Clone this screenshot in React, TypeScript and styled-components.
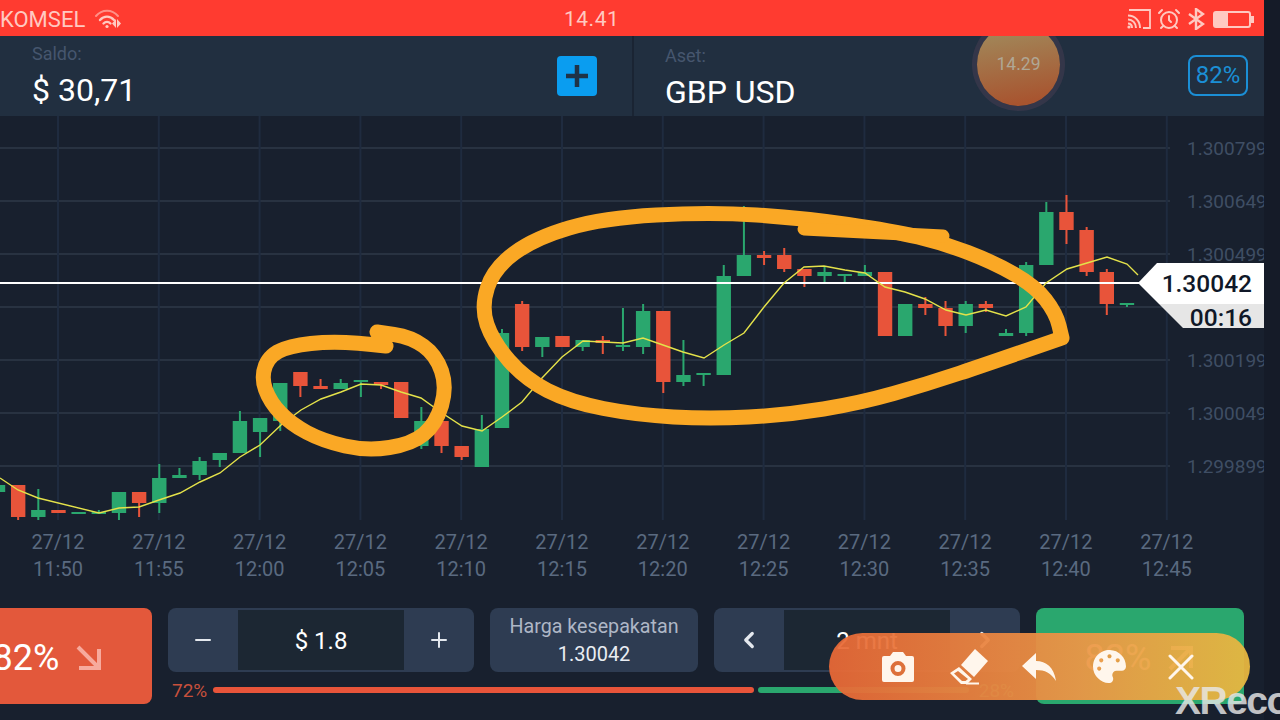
import styled, { createGlobalStyle } from "styled-components";
import { Minus, Plus, ChevronLeft, ChevronRight, AlarmClock } from "lucide-react";
import { FaPalette } from "react-icons/fa";

const RED = "#e8543a";
const GREEN = "#2aa76e";

// x = -2 + 20.16 * i, [up, bodyTop, bodyBottom, wickTop, wickBottom]
const candles: number[][] = [
  [1, 485, 492, 485, 492], [0, 485, 517, 485, 520], [1, 510, 517, 489, 520], [0, 510, 513, 510, 513],
  [1, 512, 514, 512, 514], [1, 512, 514, 510, 514], [1, 492, 513, 492, 520], [0, 492, 503, 492, 517],
  [1, 478, 503, 464, 513], [1, 475, 478, 468, 478], [1, 461, 475, 457, 480], [1, 453, 460, 453, 467],
  [1, 421, 453, 411, 453], [1, 418, 432, 418, 457], [1, 383, 421, 383, 431], [0, 372, 386, 372, 397],
  [0, 386, 389, 379, 389], [1, 383, 389, 379, 389], [1, 380, 382, 380, 397], [0, 382, 385, 382, 389],
  [0, 382, 418, 382, 418], [1, 421, 446, 407, 449], [0, 421, 446, 421, 453], [0, 446, 457, 446, 460],
  [1, 429, 467, 415, 467], [1, 333, 428, 329, 428], [0, 304, 347, 301, 351], [1, 337, 347, 337, 357],
  [0, 336, 347, 336, 347], [1, 340, 347, 340, 351], [0, 340, 343, 336, 354], [1, 345, 347, 308, 351],
  [1, 311, 347, 304, 354], [0, 311, 382, 311, 393], [1, 375, 382, 340, 386], [1, 373, 375, 373, 386],
  [1, 276, 375, 265, 375], [1, 255, 276, 206, 276], [0, 255, 258, 251, 265], [0, 255, 269, 248, 272],
  [0, 269, 276, 269, 287], [1, 272, 276, 267, 282], [1, 274, 276, 274, 282], [1, 272, 276, 265, 276],
  [0, 272, 336, 272, 336], [1, 304, 336, 304, 336], [0, 304, 308, 297, 315], [0, 308, 326, 301, 336],
  [1, 304, 326, 301, 333], [0, 304, 308, 301, 312], [1, 333, 336, 329, 336], [1, 265, 333, 262, 336],
  [1, 212, 265, 202, 265], [0, 212, 230, 195, 244], [0, 230, 272, 227, 276], [0, 272, 304, 269, 315],
  [1, 303, 305, 303, 307],
];

const maLine =
  "0,478 18,490 38,498 99,513 119,508 139,507 159,500 180,493 200,482 220,473 240,457 260,445 281,425 301,410 321,399 341,392 361,384 381,385 401,392 421,398 442,413 462,426 482,431 502,417 522,402 542,378 562,357 583,341 603,342 623,343 643,338 663,345 683,352 704,358 724,345 744,333 764,307 784,283 804,267 824,266 845,270 865,273 885,287 905,292 925,299 946,310 966,315 986,310 1006,316 1026,307 1046,283 1067,269 1087,263 1107,257 1127,264 1138,275";

const smallLoop: number[][] = [
  [386, 346], [347, 341], [298, 344], [270, 354], [261, 377], [270, 402], [291, 424], [323, 441],
  [367, 451], [412, 444], [436, 424], [447, 387], [436, 355], [411, 337], [377, 332],
];

const bigLoop: number[][] = [
  [1062, 338], [993, 362], [927, 384], [860, 403], [787, 415], [710, 419], [637, 415], [570, 402],
  [525, 379], [493, 342], [481, 307], [494, 268], [535, 238], [603, 218], [710, 212], [803, 218],
  [893, 231], [943, 243], [993, 262], [1035, 286], [1056, 313], [1062, 338],
];

// 手書きの線をなめらかにする
const smooth = (pts: number[][]) => {
  let d = `M${pts[0][0]} ${pts[0][1]}`;
  for (let i = 1; i < pts.length - 1; i++) {
    const mx = (pts[i][0] + pts[i + 1][0]) / 2;
    const my = (pts[i][1] + pts[i + 1][1]) / 2;
    d += ` Q${pts[i][0]} ${pts[i][1]} ${mx} ${my}`;
  }
  const last = pts[pts.length - 1];
  return d + ` L${last[0]} ${last[1]}`;
};

// the 4th row sits behind the price tag, so it stays empty
const prices = ["1.300799", "1.300649", "1.300499", "", "1.300199", "1.300049", "1.299899"];
const times = ["11:50", "11:55", "12:00", "12:05", "12:10", "12:15", "12:20", "12:25", "12:30", "12:35", "12:40", "12:45"];

const App = () => {
  return (
    <Root>
      <GlobalStyle />
      <Screen>
        <StatusBar>
          <Carrier>
            KOMSEL
            <svg width="28" height="20" viewBox="0 0 28 20" fill="none" stroke="currentColor" strokeLinecap="round">
              <path d="M2 7C8 0 18 0 24 7" strokeWidth="2" opacity="0.6" />
              <path d="M6 11C10 6.5 16 6.5 20 11" strokeWidth="2.4" />
              <path d="M9.5 14.5C11.5 12.5 14.5 12.5 16.5 14.5" strokeWidth="2.4" />
              <circle cx="13" cy="17.5" r="1.6" fill="currentColor" stroke="none" />
              <path d="M22 10v9l-4-4.5zM23 10v9l4-4.5z" fill="currentColor" stroke="none" />
            </svg>
          </Carrier>
          <Clock>14.41</Clock>
          <StatusIcons>
            <svg width="24" height="20" viewBox="0 0 24 20" fill="none" stroke="currentColor">
              <path d="M2 1h21v18h-7" strokeWidth="1.8" />
              <path d="M1 6.500C8 6.500 13 12 13 19M1 10.500C5.500 10.500 9 14 9 19M1 14.500C3.500 14.500 5 16.500 5 19" strokeWidth="2" />
              <circle cx="2" cy="18" r="1.600" fill="currentColor" stroke="none" />
            </svg>
            <AlarmClock size={24} strokeWidth={2} />
            <svg width="18" height="22" viewBox="0 0 18 22" fill="none" stroke="currentColor" strokeWidth="2.400">
              <path d="M2 6L16 16 9 21V1L16 6 2 16" />
            </svg>
            <Battery>
              <BatteryFill />
            </Battery>
          </StatusIcons>
        </StatusBar>

        <Header>
          <BalancePanel>
            <InfoBlock>
              <InfoLabel>Saldo:</InfoLabel>
              <InfoValue>$ 30,71</InfoValue>
            </InfoBlock>
            <AddButton>
              <svg width="24" height="24" viewBox="0 0 24 24" stroke="#1f3347" strokeWidth="4.500">
                <path d="M12 1v22M1 12h22" />
              </svg>
            </AddButton>
          </BalancePanel>
          <AssetPanel>
            <InfoBlock $low>
              <InfoLabel>Aset:</InfoLabel>
              <InfoValue>GBP USD</InfoValue>
            </InfoBlock>
            <PayoutBadge>82%</PayoutBadge>
          </AssetPanel>
        </Header>

        <ChartRow>
          <ChartSvg viewBox="0 116 1180 410" width="1180" height="410">
            {prices.map((_, i) => (
              <line key={i} x1="0" x2="1170" y1={148 + 53 * i} y2={148 + 53 * i} stroke="#283241" strokeWidth="2" />
            ))}
            {times.map((_, i) => (
              <line key={i} x1={58 + 100.8 * i} x2={58 + 100.8 * i} y1="116" y2="520" stroke="#1f2b3f" strokeWidth="2" />
            ))}
            {candles.map((c, i) => {
              const x = -2 + 20.16 * i;
              const color = c[0] ? GREEN : RED;
              return (
                <g key={i} fill={color}>
                  <rect x={x - 1} y={c[3]} width="2" height={c[4] - c[3]} />
                  <rect x={x - 7.2} y={c[1]} width="14.4" height={c[2] - c[1]} />
                </g>
              );
            })}
            <line x1="0" x2="1140" y1="283" y2="283" stroke="#fff" strokeWidth="2" />
            <polyline points={maLine} fill="none" stroke="#e4e24a" strokeWidth="1.400" />
            <path d={smooth(smallLoop)} fill="none" stroke="#faa825" strokeWidth="15" strokeLinecap="round" strokeLinejoin="round" />
            <path d={smooth(bigLoop)} fill="none" stroke="#faa825" strokeWidth="15" strokeLinecap="round" strokeLinejoin="round" />
            <path d="M804 229L943 236" fill="none" stroke="#faa825" strokeWidth="13" strokeLinecap="round" />
          </ChartSvg>
          <PriceAxis>
            {prices.map((p, i) => (
              <PriceLabel key={i}>{p}</PriceLabel>
            ))}
          </PriceAxis>
          <PriceTag>
            <TagPrice>1.30042</TagPrice>
            <TagTimer>00:16</TagTimer>
          </PriceTag>
        </ChartRow>

        <TimeAxis>
          {times.map((t) => (
            <TimeLabel key={t}>
              <span>27/12</span>
              <span>{t}</span>
            </TimeLabel>
          ))}
        </TimeAxis>

        <TradeBar>
          <TradeButton $color="#e3583b" $cut>
            82%
            <svg width="28" height="28" viewBox="0 0 28 28" fill="none" stroke="#f7aa9d" strokeWidth="4">
              <path d="M3 3L24 24M24 5V24H4" />
            </svg>
          </TradeButton>
          <Controls>
            <ControlRow>
              <Stepper>
                <StepButton><Minus size={24} strokeWidth={2} /></StepButton>
                <StepValue>$ 1.8</StepValue>
                <StepButton><Plus size={24} strokeWidth={2} /></StepButton>
              </Stepper>
              <DealPrice>
                <DealLabel>Harga kesepakatan</DealLabel>
                <DealValue>1.30042</DealValue>
              </DealPrice>
              <Stepper>
                <StepButton><ChevronLeft size={26} strokeWidth={3} /></StepButton>
                <StepValue>2 mnt</StepValue>
                <StepButton><ChevronRight size={26} strokeWidth={3} /></StepButton>
              </Stepper>
            </ControlRow>
            <SentimentRow>
              <SentimentLabel $color="#c8503c">72%</SentimentLabel>
              <SentimentBar $share={72} $color={RED} />
              <SentimentBar $share={28} $color={GREEN} />
              <SentimentLabel $color={GREEN} $gap={6}>28%</SentimentLabel>
            </SentimentRow>
          </Controls>
          <TradeButton $color={GREEN}>
            82%
            <svg width="28" height="28" viewBox="0 0 28 28" fill="none" stroke="#fff" strokeWidth="4">
              <path d="M3 25L24 4M4 4H24V24" />
            </svg>
          </TradeButton>
        </TradeBar>
      </Screen>

      <FloatingTimer>14.29</FloatingTimer>

      <RecorderBar>
        <RecorderSlot>
          <svg width="34" height="32" viewBox="0 0 34 32">
            <path
              fill="currentColor"
              fillRule="evenodd"
              d="M3 5h6l3-4h10l3 4h6a2 2 0 0 1 2 2v22a2 2 0 0 1-2 2H3a2 2 0 0 1-2-2V7a2 2 0 0 1 2-2zM17 10a7.500 7.500 0 1 0 0 15 7.500 7.500 0 0 0 0-15zM17 14a3.500 3.500 0 1 1 0 7 3.500 3.500 0 0 1 0-7z"
            />
          </svg>
        </RecorderSlot>
        <RecorderSlot>
          <svg width="38" height="36" viewBox="0 0 38 36">
            <path fill="currentColor" d="M25 0L38 12 24 28 11 16z" />
            <path fill="currentColor" fillRule="evenodd" d="M9 18L22 30 17 35 11 35 0 24zM8 22L4 24.500 12 32 15.500 32 18 30z" />
            <path d="M16 34.500H29" stroke="currentColor" strokeWidth="2" />
          </svg>
        </RecorderSlot>
        <RecorderSlot>
          <svg width="36" height="30" viewBox="0 0 36 30">
            <path fill="currentColor" d="M15 1V9C25 9 33 15 35 29 30 21 24 18 15 18V27L1 14z" />
          </svg>
        </RecorderSlot>
        <RecorderSlot>
          <FaPalette size={33} />
        </RecorderSlot>
        <RecorderSlot>
          <svg width="26" height="26" viewBox="0 0 26 26" stroke="currentColor" strokeWidth="3" strokeLinecap="round">
            <path d="M2 2L24 24M24 2L2 24" />
          </svg>
        </RecorderSlot>
      </RecorderBar>

      <Watermark>XRecorder</Watermark>
    </Root>
  );
};

const GlobalStyle = createGlobalStyle`
  html, body {
    margin: 0;
    background: #171e2c;
  }
  * {
    box-sizing: border-box;
  }
`;

const Root = styled.div`
  position: relative;
  width: 1280px;
  height: 720px;
  overflow: hidden;
  background: #151b28;
  font-family: Roboto, "Liberation Sans", sans-serif;
`;

const Screen = styled.div`
  display: flex;
  flex-direction: column;
  width: 1264px;
  height: 720px;
  overflow: hidden;
  background: #18202e;
`;

const StatusBar = styled.div`
  position: relative;
  z-index: 3;
  display: flex;
  align-items: center;
  flex: 0 0 36px;
  padding-top: 2px;
  background: #ff3b30;
  color: #ffc9c1;
  font-size: 21px;
`;

const Carrier = styled.div`
  display: flex;
  align-items: center;
  gap: 9px;
  flex: 0 0 564px;
  font-size: 22px;
`;

const Clock = styled.div`
  letter-spacing: 0.5px;
`;

const StatusIcons = styled.div`
  display: flex;
  align-items: center;
  gap: 6px;
  margin-left: auto;
  padding-right: 13px;
`;

const Battery = styled.div`
  position: relative;
  width: 38px;
  height: 17px;
  margin-left: 2px;
  border: 2px solid currentColor;
  border-radius: 3px;

  &::after {
    content: "";
    position: absolute;
    top: 3px;
    right: -5px;
    width: 3px;
    height: 7px;
    background: currentColor;
  }
`;

const BatteryFill = styled.div`
  width: 13px;
  height: 100%;
  background: currentColor;
`;

const Header = styled.div`
  display: flex;
  flex: 0 0 80px;
  background: #212f40;
`;

const BalancePanel = styled.div`
  display: flex;
  align-items: center;
  justify-content: space-between;
  flex: 0 0 632px;
  padding: 0 35px 0 32px;
`;

const AssetPanel = styled.div`
  display: flex;
  align-items: center;
  justify-content: space-between;
  flex: 1;
  padding: 0 16px 0 31px;
  border-left: 2px solid #1a2433;
`;

const InfoBlock = styled.div<{ $low?: boolean }>`
  display: flex;
  flex-direction: column;
  gap: 5px;
  padding-top: ${(p) => (p.$low ? "4px" : "1px")};
`;

const InfoLabel = styled.div`
  color: #46566e;
  font-size: 18px;
  line-height: 22px;
`;

const InfoValue = styled.div`
  color: #fff;
  font-size: 32px;
  line-height: 40px;
`;

const AddButton = styled.div`
  display: flex;
  align-items: center;
  justify-content: center;
  width: 40px;
  height: 40px;
  border-radius: 4px;
  background: #0a9df0;
`;

const PayoutBadge = styled.div`
  width: 60px;
  height: 41px;
  margin-top: -1px;
  border: 2px solid #1b8fd6;
  border-radius: 8px;
  color: #1b8fd6;
  font-size: 24px;
  line-height: 37px;
  text-align: center;
`;

const ChartRow = styled.div`
  position: relative;
  display: flex;
  flex: 0 0 410px;
`;

const ChartSvg = styled.svg`
  display: block;
  flex: 0 0 1180px;
  overflow: visible;
`;

const PriceAxis = styled.div`
  display: flex;
  flex-direction: column;
  padding: 6px 0 0 7px;
  white-space: nowrap;
`;

const PriceLabel = styled.div`
  height: 53px;
  color: #3f4e64;
  font-size: 19px;
  line-height: 53px;
`;

const PriceTag = styled.div`
  position: absolute;
  top: 147px;
  right: 0;
  display: flex;
  flex-direction: column;
  width: 126px;
  height: 65px;
  clip-path: polygon(19px 0, 100% 0, 100% 100%, 45px 100%, 0 20px);
  color: #101828;
  font-size: 24.500px;
  font-weight: 500;
  text-align: right;
`;

const TagPrice = styled.div`
  flex: 0 0 40px;
  padding: 1px 12px 0 0;
  background: #fff;
  line-height: 40px;
`;

const TagTimer = styled.div`
  flex: 1;
  padding: 1px 12px 0 0;
  background: #e6e6e6;
  line-height: 25px;
`;

const TimeAxis = styled.div`
  display: flex;
  padding: 3px 0 0 7.6px;
`;

const TimeLabel = styled.div`
  display: flex;
  flex-direction: column;
  align-items: center;
  flex: 0 0 100.8px;
  color: #5a6a80;
  font-size: 20px;
  line-height: 27px;
`;

const TradeBar = styled.div`
  display: flex;
  gap: 16px;
  margin: 25px 0 0 -56px;
`;

const TradeButton = styled.div<{ $color: string; $cut?: boolean }>`
  display: flex;
  align-items: center;
  justify-content: center;
  gap: 16px;
  flex: 0 0 208px;
  height: 96px;
  padding-top: 3px;
  border-radius: ${(p) => (p.$cut ? "0 8px 8px 0" : "8px")};
  background: ${(p) => p.$color};
  color: #fff;
  font-size: 36px;
`;

const Controls = styled.div`
  display: flex;
  flex-direction: column;
  flex: 0 0 852px;
`;

const ControlRow = styled.div`
  display: grid;
  grid-template-columns: 306px 208px 306px;
  gap: 16px;
  height: 64px;
`;

const Stepper = styled.div`
  display: grid;
  grid-template-columns: 70px 1fr 70px;
  border-radius: 8px;
  background: #2e3c52;
`;

const StepButton = styled.div`
  display: flex;
  align-items: center;
  justify-content: center;
  color: #e4e8ee;
`;

const StepValue = styled.div`
  display: flex;
  align-items: center;
  justify-content: center;
  margin: 2px 0;
  padding-top: 1px;
  background: #1c2733;
  color: #fff;
  font-size: 24px;
`;

const DealPrice = styled.div`
  display: flex;
  flex-direction: column;
  align-items: center;
  justify-content: center;
  gap: 3px;
  border-radius: 8px;
  background: #2e3c52;
`;

const DealLabel = styled.div`
  color: #aeb7c6;
  font-size: 19.700px;
  line-height: 24px;
`;

const DealValue = styled.div`
  color: #e9edf2;
  font-size: 20px;
  line-height: 24px;
`;

const SentimentRow = styled.div`
  display: flex;
  align-items: center;
  gap: 4px;
  height: 24px;
  margin-top: 6px;
  padding: 0 4px 0 2px;
`;

const SentimentLabel = styled.div<{ $color: string; $gap?: number }>`
  margin: 0 2px 0 ${(p) => p.$gap ?? 2}px;
  color: ${(p) => p.$color};
  font-size: 19px;
`;

const SentimentBar = styled.div<{ $share: number; $color: string }>`
  flex: ${(p) => p.$share};
  height: 6px;
  border-radius: 3px;
  background: ${(p) => p.$color};
`;

const FloatingTimer = styled.div`
  position: absolute;
  left: 977px;
  top: 23px;
  z-index: 2;
  width: 83px;
  height: 83px;
  border-radius: 50%;
  background: linear-gradient(170deg, #a08f60 0%, #a8542f 90%);
  box-shadow: 0 0 0 5px rgba(70, 60, 80, 0.55);
  color: #b0a794;
  font-size: 17.500px;
  line-height: 83px;
  text-align: center;
`;

const RecorderBar = styled.div`
  position: absolute;
  left: 829px;
  top: 633px;
  z-index: 4;
  display: flex;
  align-items: center;
  width: 421px;
  height: 67px;
  padding-left: 33.500px;
  border-radius: 34px;
  background: linear-gradient(90deg, rgba(232, 104, 54, 0.94) 0%, rgba(236, 150, 70, 0.94) 60%, rgba(232, 184, 64, 0.94) 100%);
  color: #fff6ec;
`;

const RecorderSlot = styled.div`
  display: flex;
  align-items: center;
  justify-content: center;
  flex: 0 0 70.700px;
`;

const Watermark = styled.div`
  position: absolute;
  left: 1175px;
  top: 680px;
  z-index: 5;
  color: rgba(232, 232, 232, 0.82);
  font-family: "Liberation Sans", sans-serif;
  font-size: 39px;
  font-weight: 700;
  letter-spacing: -1.500px;
  line-height: 42px;
  white-space: nowrap;
`;

export default App;
